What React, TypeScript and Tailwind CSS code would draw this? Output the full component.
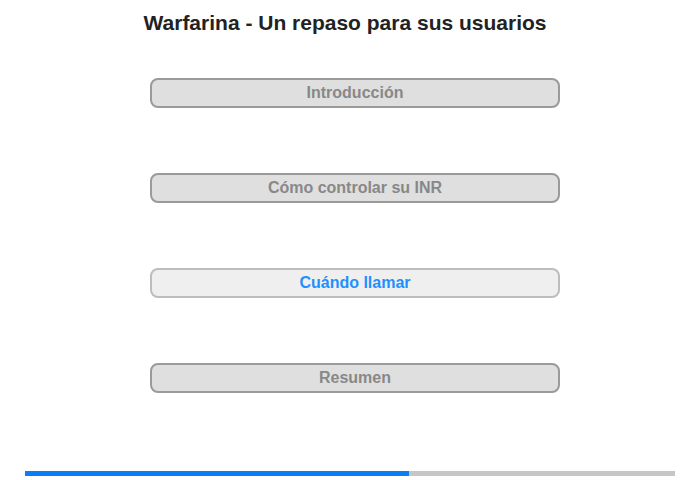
import React from "react";

const sections = [
  { label: "Introducción", active: false },
  { label: "Cómo controlar su INR", active: false },
  { label: "Cuándo llamar", active: true },
  { label: "Resumen", active: false },
];

export default function App() {
  return (
    <div className="w-[700px] h-[480px] bg-white relative font-['Liberation_Sans',Arial,sans-serif]">
      {/* Title */}
      <h1 className="w-[690px] pt-[11px] text-center text-[21px] leading-[24px] font-bold text-[#222]">
        Warfarina - Un repaso para sus usuarios
      </h1>

      {/* Section buttons */}
      <div className="flex flex-col gap-[65px] pl-[150px] pt-[43px]">
        {sections.map((s) => (
          <button
            key={s.label}
            className={
              s.active
                ? "w-[410px] h-[30px] rounded-[8px] border-2 border-[#bdbdbd] bg-[#efefef] text-[16px] font-bold text-[#1e90ff]"
                : "w-[410px] h-[30px] rounded-[8px] border-2 border-[#9a9a9a] bg-[#dfdfdf] text-[16px] font-bold text-[#888]"
            }
          >
            {s.label}
          </button>
        ))}
      </div>

      {/* Progress bar */}
      <div className="absolute left-[25px] top-[471px] w-[650px] h-[5px] bg-[#c6c6c6] flex">
        <div className="w-[384px] h-full bg-[#0a7ff5]" />
      </div>
    </div>
  );
}
